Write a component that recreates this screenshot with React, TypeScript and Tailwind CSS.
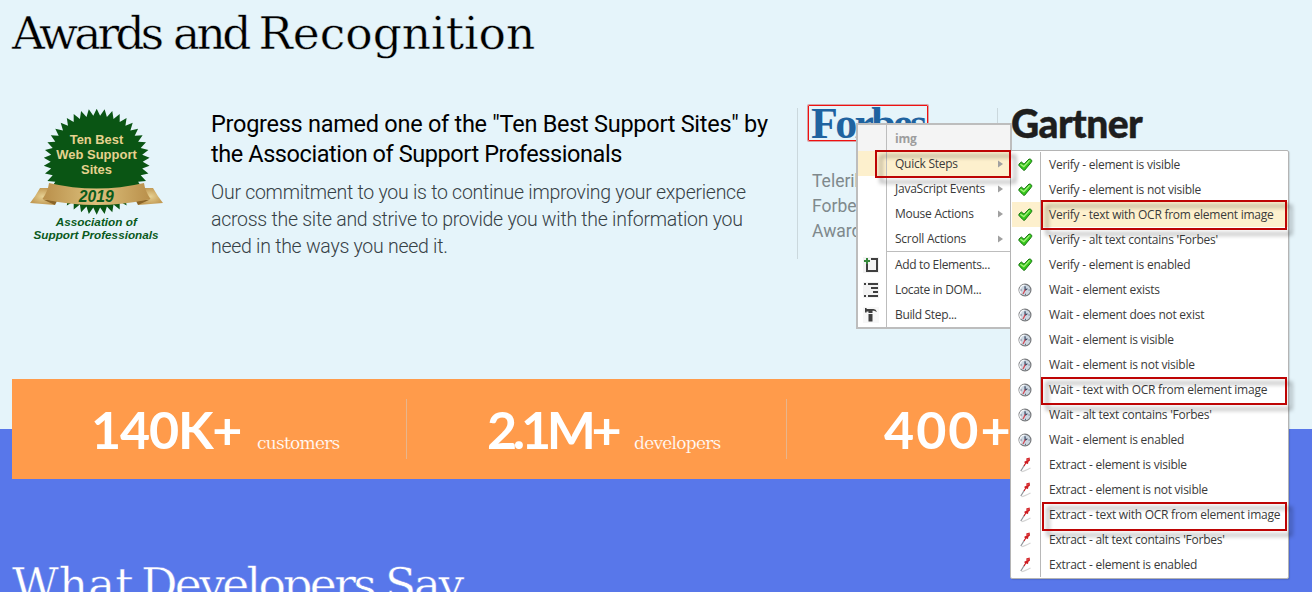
import React from "react";

type IconKind = "check" | "clock" | "pin";

const points = Array.from({ length: 84 }, (_, i) => {
  const r = i % 2 === 0 ? 53 : 46;
  const a = (i / 84) * Math.PI * 2 - Math.PI / 2;
  return `${(76.7 + r * Math.cos(a)).toFixed(1)},${(61.7 + r * Math.sin(a)).toFixed(1)}`;
}).join(" ");

function Badge() {
  return (
    <svg width="160" height="150" viewBox="0 0 160 150" className="block shrink-0">
      <defs>
        <linearGradient id="gold" x1="0" x2="1" y1="0" y2="0">
          <stop offset="0" stopColor="#b98f4a" />
          <stop offset="0.5" stopColor="#dcc07c" />
          <stop offset="1" stopColor="#b98f4a" />
        </linearGradient>
        <radialGradient id="tail">
          <stop offset="0" stopColor="#e6d193" />
          <stop offset="1" stopColor="#c39b55" />
        </radialGradient>
      </defs>
      <polygon points={points} fill="#0a5514" />
      <path d="M20 88 L33 88 L35 105 L10 103 Q15 97 20 88Z" fill="url(#tail)" />
      <path d="M133 88 L120 88 L118 105 L143 103 Q138 97 133 88Z" fill="url(#tail)" />
      <path d="M23 99.5 L35 105 L37 101Z M130 99.5 L118 105 L116 101Z" fill="#8a6427" />
      <path d="M29 83 Q76.5 94 124 83 Q125 91 130.5 99 Q76.5 111 22.5 99 Q28 91 29 83Z" fill="url(#gold)" />
      <g fontFamily="'Liberation Sans', Arial, sans-serif" fontWeight="700" textAnchor="middle">
        <g fill="#e6d28e" fontSize="13">
          <text x="76.5" y="43.5" textLength="53.5" lengthAdjust="spacingAndGlyphs">Ten Best</text>
          <text x="76.5" y="58.7" textLength="80.5" lengthAdjust="spacingAndGlyphs">Web Support</text>
          <text x="76.5" y="74" textLength="31" lengthAdjust="spacingAndGlyphs">Sites</text>
        </g>
        <g fill="#0a5a1c" fontStyle="italic">
          <text x="76.3" y="101.7" fontSize="16" textLength="35" lengthAdjust="spacingAndGlyphs">2019</text>
          <text x="76.3" y="125.5" fontSize="11.5" textLength="81" lengthAdjust="spacingAndGlyphs">Association of</text>
          <text x="76" y="138.8" fontSize="11.5" textLength="125" lengthAdjust="spacingAndGlyphs">Support Professionals</text>
        </g>
      </g>
    </svg>
  );
}

function CheckIcon() {
  return (
    <svg width="15" height="14" viewBox="0 0 15 14">
      <path d="M1 6 L3.4 4 L6 6.2 L11 1 Q12.8 .8 13.8 2.4 Q14 3.6 13 4.6 L6.6 12.3 Q5.6 12.6 4.8 11.6 L.9 7.4Z" fill="#35c81c" stroke="#17720f" strokeWidth="1" strokeLinejoin="round" />
      <path d="M2.4 6.3 L5.8 8.6 L11.6 2.4" fill="none" stroke="#a5f27c" strokeWidth="1.3" />
    </svg>
  );
}

function ClockIcon() {
  return (
    <svg width="14" height="14" viewBox="0 0 14 14">
      <circle cx="7" cy="7" r="5.9" fill="#cdd7e2" stroke="#77797c" strokeWidth="1.2" />
      <path d="M3.2 10.6 A5 5 0 0 1 6.5 2.2" fill="none" stroke="#f7f9fb" strokeWidth="1.2" />
      <path d="M7.2 7.4 L7 3.2 M7.2 7.4 L9.4 5.6" stroke="#31445e" strokeWidth="1.2" />
      <path d="M7.3 6.4 L5 11" stroke="#d2434f" strokeWidth="1.2" />
      <path d="M2.6 7h1M10.6 7h1M7.5 10.8v1" stroke="#42526a" strokeWidth="1" />
    </svg>
  );
}

function PinIcon() {
  return (
    <svg width="14" height="16" viewBox="0 0 14 16">
      <path d="M3.5 14.6 Q6 14.5 12.5 11" fill="none" stroke="#d4d4d4" strokeWidth="1.2" />
      <path d="M2.8 14 L6.8 7.5" stroke="#8d9298" strokeWidth="1.2" />
      <path d="M8.2 1.4 L11.6 .6 L12 3.6 L10.4 4.8 L10 7 L8.2 6.4 L6.4 9.2 L5.6 8.7 L7.1 6 L6 5 L8.6 3.4Z" fill="#cf1d22" />
      <path d="M9 3.2 L10.8 2" stroke="#ef6a66" strokeWidth=".8" />
    </svg>
  );
}

function AddIcon() {
  return (
    <svg width="16" height="16" viewBox="0 0 16 16" shapeRendering="crispEdges">
      <rect x="0" y="0" width="16" height="16" fill="#f3f3f3" />
      <path d="M8 1h7v14h-12v-8h2v6h8v-10h-5z" fill="#3f3f3f" />
      <path d="M3 1h2v2h2v2h-2v2h-2v-2h-2v-2h2z" fill="#35883a" />
    </svg>
  );
}

function LocateIcon() {
  return (
    <svg width="16" height="16" viewBox="0 0 16 16" shapeRendering="crispEdges">
      <rect x="0" y="0" width="16" height="16" fill="#f3f3f3" />
      <path d="M1 1h2v2h-2zM5 1h10v2h-10zM8 5h7v2h-7zM10 9h5v2h-5zM1 13h2v2h-2zM5 13h10v2h-10z" fill="#3f3f3f" />
    </svg>
  );
}

function HammerIcon() {
  return (
    <svg width="16" height="16" viewBox="0 0 16 16">
      <rect x="0" y="0" width="16" height="16" fill="#f7f7f7" />
      <path d="M2 1h1.6v1H10.5q2.5 .2 3.5 3l-3-1.2H9.500V6H5.500V4.500H3.600V5.500H2zM5.500 7h4v7.500h-4z" fill="#3f3f3f" />
    </svg>
  );
}

const subItems: { icon: IconKind; label: string; active?: boolean }[] = [
  { icon: "check", label: "Verify - element is visible" },
  { icon: "check", label: "Verify - element is not visible" },
  { icon: "check", label: "Verify - text with OCR from element image", active: true },
  { icon: "check", label: "Verify - alt text contains 'Forbes'" },
  { icon: "check", label: "Verify - element is enabled" },
  { icon: "clock", label: "Wait - element exists" },
  { icon: "clock", label: "Wait - element does not exist" },
  { icon: "clock", label: "Wait - element is visible" },
  { icon: "clock", label: "Wait - element is not visible" },
  { icon: "clock", label: "Wait - text with OCR from element image" },
  { icon: "clock", label: "Wait - alt text contains 'Forbes'" },
  { icon: "clock", label: "Wait - element is enabled" },
  { icon: "pin", label: "Extract - element is visible" },
  { icon: "pin", label: "Extract - element is not visible" },
  { icon: "pin", label: "Extract - text with OCR from element image" },
  { icon: "pin", label: "Extract - alt text contains 'Forbes'" },
  { icon: "pin", label: "Extract - element is enabled" },
];

const stepMenus = ["Quick Steps", "JavaScript Events", "Mouse Actions", "Scroll Actions"];

function ContextMenu() {
  return (
    <div className="absolute left-[856px] top-[123px] w-[156px] border-2 border-[#bdbdbd] bg-white">
      <div className="flex h-[26px] bg-[#f4f4f4]">
        <div className="w-[29px] border-r border-[#bdbdbd]" />
        <div className="pl-2 font-bold leading-[27px] text-[#9d9d9d]">img</div>
      </div>
      {stepMenus.map((label, i) => (
        <div key={label} className={`flex h-[25px] items-center ${i === 0 ? "bg-[#fdf0cd]" : ""}`}>
          <div className="h-full w-[29px] shrink-0 border-r border-[#bdbdbd]" />
          <span className="grow pl-2 leading-[25px]">{label}</span>
          <svg width="5" height="8" viewBox="0 0 5 8" className="mr-[7px]">
            <path d="M0 0.5 L5 4 L0 7.5Z" fill="#a0a0a0" />
          </svg>
        </div>
      ))}
      <div className="ml-[28px] h-px bg-[#bdbdbd]" />
      {[
        { icon: <AddIcon />, label: "Add to Elements..." },
        { icon: <LocateIcon />, label: "Locate in DOM..." },
        { icon: <HammerIcon />, label: "Build Step..." },
      ].map(({ icon, label }) => (
        <div key={label} className="flex h-[25px] items-center">
          <div className="flex h-full w-[29px] shrink-0 items-center border-r border-[#bdbdbd] pl-[5px]">{icon}</div>
          <span className="pl-2 leading-[25px] tracking-[-0.34px]">{label}</span>
        </div>
      ))}
    </div>
  );
}

function SubMenu() {
  return (
    <div className="absolute left-[1010px] top-[150px] h-[429px] w-[279px] rounded-[2px] border border-[#b4b4b4] bg-white py-px shadow-[1px_1px_1px_rgba(0,0,0,0.12)]">
      {subItems.map(({ icon, label, active }) => (
        <div key={label} className={`ml-px flex h-[25px] ${active ? "bg-[#fdf0cd]" : ""}`}>
          <div className="flex w-[29px] shrink-0 items-center border-r border-[#b8b8b8] pl-[6px]">
            {icon === "check" && <CheckIcon />}
            {icon === "clock" && <ClockIcon />}
            {icon === "pin" && <PinIcon />}
          </div>
          <span className="whitespace-nowrap pl-2 leading-[25px]">{label}</span>
        </div>
      ))}
    </div>
  );
}

const markBase = "absolute border-2 border-[#be0404] drop-shadow-[5px_5px_2px_rgba(0,0,0,0.4)]";

export default function App() {
  return (
    <div className="relative h-[592px] w-[1312px] overflow-hidden bg-[#5877ea] font-[Roboto,sans-serif]">
      <section className="h-[429px] bg-[#e5f4fa] pt-[6px]">
        <h1 className="whitespace-nowrap pl-3 font-['DejaVu_Serif',serif] text-[45.5px] leading-[56px] text-black [-webkit-text-stroke:0.4px_#e5f4fa]">
          <span className="tracking-[-3.8px] [word-spacing:2px]">Awards </span>
          <span className="tracking-[-3.6px]">and </span>
          <span className="tracking-[0px]">Recognition</span>
        </h1>
        <div className="flex pl-5 pt-[38px]">
          <Badge />
          <div className="w-[617px] whitespace-nowrap pl-[31px] pt-[9px]">
            <h2 className="text-[23.5px] leading-[30px] text-black">
              <span className="block tracking-[-0.27px]">Progress named one of the "Ten Best Support Sites" by</span>
              <span className="block tracking-[-0.42px]">the Association of Support Professionals</span>
            </h2>
            <p className="mt-[10px] text-[19.5px] font-light leading-[27px] tracking-[-0.27px] text-[#364146]">
              Our commitment to you is to continue improving your experience
              <br />
              across the site and strive to provide you with the information you
              <br />
              need in the ways you need it.
            </p>
          </div>
          <div className="mt-2 h-[151px] w-[200px] border-l border-[#cbd8dd] pl-[10px]">
            <div className="-mt-[3px] h-[36px] w-[120px] rounded-[1px] border border-[#f01010] shadow-[0_0_0_1px_rgba(200,60,60,0.45)]">
              <div className="pl-[2px] font-['Liberation_Serif',serif] text-[44px] font-bold leading-[35px] tracking-[-2.7px] text-[#1f63a0]">
                Forbes
              </div>
            </div>
            <p className="mt-[28px] pl-1 text-[17.5px] leading-[25px] text-[#7f898c]">
              Telerik
              <br />
              Forbes
              <br />
              Award
            </p>
          </div>
          <div className="mt-2 h-[151px] border-l border-[#cbd8dd] pl-[13px]">
            <div className="pt-px font-[Lato,sans-serif] text-[39px] font-black leading-[28px] tracking-[-0.6px] text-[#1e1e1e] [-webkit-text-stroke:0.4px_#1e1e1e]">
              Gartner
            </div>
          </div>
        </div>
      </section>

      <div className="relative ml-3 mt-[-50px] flex h-[100px] w-[1140px] items-center bg-[#ff9b4b] text-white">
        {[
          { n: "140K+", label: "customers", box: "w-[395px] border-r pl-[79px]", num: "w-[166px] tracking-[-1.2px]" },
          { n: "2.1M+", label: "developers", box: "w-[380px] border-r pl-[80px]", num: "w-[147px] tracking-[-4.3px]" },
          { n: "400+", label: "", box: "w-[365px] pl-[97px]", num: "w-[150px] tracking-[2px]" },
        ].map(({ n, label, box, num }) => (
          <div key={n} className={`flex h-[60px] shrink-0 items-baseline border-[#e8b58c] ${box}`}>
            <span className={`shrink-0 font-[Lato,sans-serif] text-[52px] font-bold leading-[60px] ${num}`}>{n}</span>
            <span className="font-['DejaVu_Serif',serif] text-[17px] tracking-[-0.75px] [-webkit-text-stroke:0.2px_#ff9b4b]">
              {label}
            </span>
          </div>
        ))}
      </div>

      <h1 className="mt-[78px] whitespace-nowrap pl-3 font-['DejaVu_Serif',serif] text-[45.5px] leading-[56px] text-white [-webkit-text-stroke:0.4px_#5877ea]">
        <span className="tracking-[0px] [word-spacing:-7px]">What </span>
        <span className="tracking-[-2.6px] [word-spacing:-1px]">Developers </span>
        <span className="tracking-[-2.4px]">Say</span>
      </h1>

      <div className="font-['Open_Sans',sans-serif] text-[12px] tracking-[-0.25px] text-[#3a3a3a]">
        <ContextMenu />
        <SubMenu />
      </div>
      <div className={`${markBase} left-[875px] top-[150px] h-[28px] w-[136px]`} />
      <div className={`${markBase} left-[1041px] top-[200px] h-[30px] w-[246px]`} />
      <div className={`${markBase} left-[1041px] top-[377px] h-[28px] w-[246px]`} />
      <div className={`${markBase} left-[1042px] top-[502px] h-[29px] w-[245px]`} />
    </div>
  );
}
